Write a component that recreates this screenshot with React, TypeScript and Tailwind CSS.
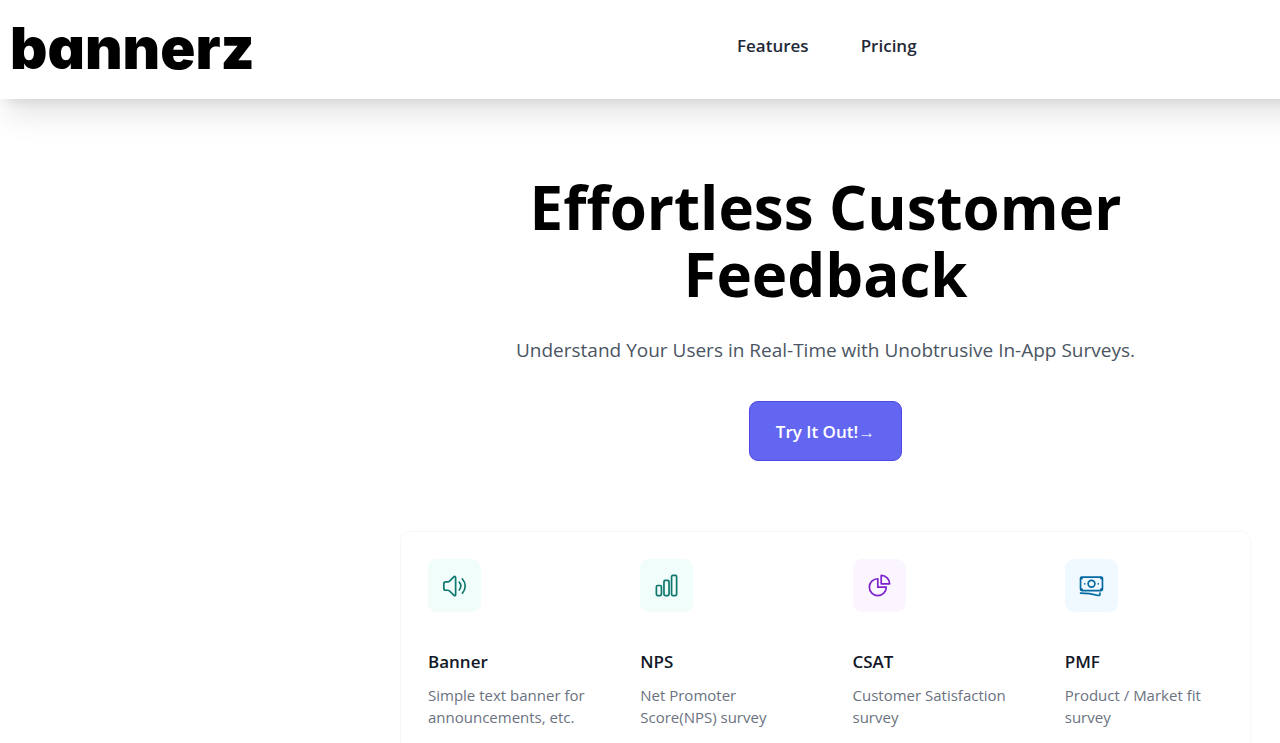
import { HiOutlineBanknotes, HiOutlineChartBar, HiOutlineChartPie } from "react-icons/hi2";
import type { ComponentType, SVGProps } from "react";

type Feature = {
  title: string;
  description: string;
  icon: ComponentType<SVGProps<SVGSVGElement>>;
  tone: string;
};

function SpeakerIcon(props: SVGProps<SVGSVGElement>) {
  return (
    <svg
      viewBox="0 0 24 24"
      fill="none"
      stroke="currentColor"
      strokeWidth="1.5"
      strokeLinecap="round"
      strokeLinejoin="round"
      {...props}
    >
      <path d="M2.5 10.6c0-1 .8-1.8 1.8-1.8h1.5c.7 0 1.3-.2 1.8-.7l4-3.9c.5-.5 1.4-.2 1.4.6v15.4c0 .8-.9 1.1-1.4.6l-4-3.9c-.5-.5-1.1-.7-1.8-.7H4.3c-1 0-1.8-.8-1.8-1.8z" />
      <path d="M16.2 9a5 5 0 0 1 0 7M19 6.2a9.2 9.2 0 0 1 0 12.6" />
    </svg>
  );
}

const features: Feature[] = [
  {
    title: "Banner",
    description: "Simple text banner for announcements, etc.",
    icon: SpeakerIcon,
    tone: "bg-[#f0fdfa] text-[#0f766e]",
  },
  {
    title: "NPS",
    description: "Net Promoter Score(NPS) survey",
    icon: HiOutlineChartBar,
    tone: "bg-[#f0fdfa] text-[#0f766e]",
  },
  {
    title: "CSAT",
    description: "Customer Satisfaction survey",
    icon: HiOutlineChartPie,
    tone: "bg-[#faf5ff] text-[#7e22ce]",
  },
  {
    title: "PMF",
    description: "Product / Market fit survey",
    icon: HiOutlineBanknotes,
    tone: "bg-[#f0f9ff] text-[#0369a1]",
  },
];

function Header() {
  return (
    <header className="-mr-16 flex items-start bg-white pt-[18px] pb-[21px] pl-[10px] shadow-[0_22px_28px_-6px_rgba(0,0,0,0.1),0_9px_11px_-7px_rgba(0,0,0,0.1)]">
      <a
        href="#home"
        className="w-[727px] font-['Inter'] text-[58px] leading-[60px] font-black text-black [font-feature-settings:'cv11']"
      >
        bannerz
      </a>
      <nav className="flex gap-[52px] pt-[14px] text-[17px] leading-7 font-semibold text-[#1f2937]">
        <a href="#features">Features</a>
        <a href="#pricing">Pricing</a>
      </nav>
    </header>
  );
}

function FeatureCell({ title, description, icon: Icon, tone }: Feature) {
  return (
    <li className="flex flex-col items-start p-[27px]">
      <span className={`rounded-[9px] p-[13px] ${tone}`}>
        <Icon className="size-[27px]" aria-hidden="true" />
      </span>
      <h3 className="mt-9 text-[17px] leading-7 font-semibold text-[#111827]">{title}</h3>
      <p className="mt-2 text-[15px] leading-[22px] text-[#6b7280]">{description}</p>
    </li>
  );
}

export default function App() {
  return (
    <div className="min-h-screen overflow-hidden bg-white font-['Open_Sans','Noto_Sans',sans-serif]">
      <Header />
      <main className="pr-[30px] pl-[401px]">
        <section className="flex flex-col items-center pt-[75px] text-center">
          <h1 className="max-w-[680px] text-[60px] leading-[67px] font-bold text-black">
            Effortless Customer Feedback
          </h1>
          <p className="mt-6 text-[19px] leading-9 text-[#4b5563]">
            Understand Your Users in Real-Time with Unobtrusive In-App Surveys.
          </p>
          <a
            href="#try"
            className="mt-[33px] rounded-[9px] border border-[#4f46e5] bg-[#6366f1] px-[26px] pt-4 pb-[14px] text-[17px] leading-7 font-semibold text-white"
          >
            Try It Out!
            <span className="font-normal text-[#e0e7ff]" aria-hidden="true">
              →
            </span>
          </a>
        </section>
        <ul
          id="features"
          className="mt-[71px] grid grid-cols-4 rounded-[9px] bg-white pb-10 shadow-[0_0_3px_rgba(0,0,0,0.08)]"
        >
          {features.map((feature) => (
            <FeatureCell key={feature.title} {...feature} />
          ))}
        </ul>
      </main>
    </div>
  );
}
